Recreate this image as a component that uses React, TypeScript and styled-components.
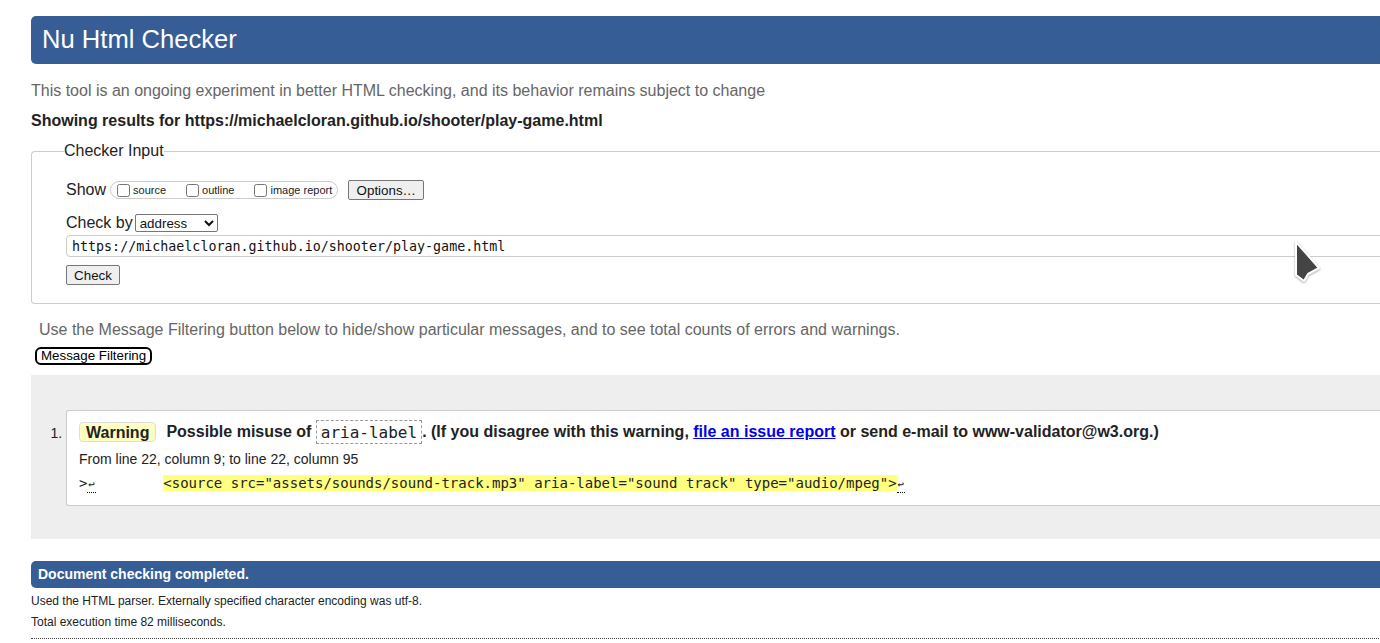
import React from "react";
import styled, { createGlobalStyle } from "styled-components";

const Global = createGlobalStyle`
  html, body { margin: 0; padding: 0; overflow: hidden; background: #fff; }
  body { font-family: "Liberation Sans", Arial, sans-serif; color: #222; }
`;

const Page = styled.div`
  position: relative;
  width: 1500px;
  padding: 16px 0 0 31px;
  font-size: 16px;
`;

const Header = styled.h1`
  margin: 0;
  height: 48px;
  line-height: 46px;
  padding-left: 11px;
  background: #365d95;
  color: #fff;
  font-size: 25.6px;
  font-weight: normal;
  border-radius: 5px 0 0 5px;
`;

const Intro = styled.p`
  margin: 17px 0 0;
  line-height: 19px;
  color: #666;
`;

const Showing = styled.p`
  margin: 11px 0 0;
  line-height: 19px;
  font-weight: bold;
`;

const Fieldset = styled.fieldset`
  margin: 12px 0 0;
  padding: 0 0 18px 34px;
  border: 1px solid #ccc;
  border-right: none;
  border-radius: 4px 0 0 4px;
`;

const Legend = styled.legend`
  padding: 0;
  margin-left: -2px;
  line-height: 18px;
  font-size: 16px;
  color: #222;
`;

const Row = styled.div<{ $mt: number; $h: number }>`
  display: flex;
  align-items: center;
  height: ${(p) => p.$h}px;
  margin-top: ${(p) => p.$mt}px;
`;

const Label = styled.span<{ $mr: number }>`
  line-height: 18px;
  margin-right: ${(p) => p.$mr}px;
`;

const OptionBox = styled.div`
  display: flex;
  align-items: center;
  height: 18px;
  box-sizing: border-box;
  border: 1px solid #ccc;
  border-radius: 9px;
  padding: 0 5px 0 2px;
  font-size: 11px;
  color: #222;
`;

const Opt = styled.label<{ $mr: number }>`
  display: flex;
  align-items: center;
  margin-right: ${(p) => p.$mr}px;
  input { margin: 0 3px 0 4px; width: 13px; height: 13px; }
`;

const Btn = styled.button`
  font-family: "Liberation Sans", Arial, sans-serif;
  font-size: 13.33px;
  color: #111;
  background: #efefef;
  border: 1px solid #767676;
  border-radius: 2px;
  height: 20px;
  padding: 0 7px;
  box-sizing: border-box;
`;

const OptionsBtn = styled(Btn)`
  margin-left: 10px;
  width: 76px;
  padding: 0;
`;

const Select = styled.select`
  font-family: "Liberation Sans", Arial, sans-serif;
  font-size: 13.33px;
  width: 83px;
  height: 18px;
  padding: 0;
  border: 1px solid #767676;
  border-radius: 2px;
  background: #fff;
  color: #111;
`;

const UrlInput = styled.input`
  display: block;
  width: 1400px;
  height: 22px;
  box-sizing: border-box;
  margin-top: 3px;
  border: 1px solid #ccc;
  border-radius: 4px;
  padding: 0 5px;
  font-family: "DejaVu Sans Mono", monospace;
  font-size: 13.33px;
  color: #111;
  background: #fff;
`;

const CheckBtn = styled(Btn)`
  display: block;
  margin-top: 8px;
  width: 54px;
  padding: 0;
`;

const FilterNote = styled.p`
  margin: 16px 0 0;
  padding-left: 8px;
  line-height: 19px;
  color: #666;
`;

const FilterBtn = styled.button`
  display: block;
  margin: 8px 0 0 4px;
  height: 18px;
  box-sizing: border-box;
  padding: 0 4px;
  border: 2px solid #000;
  border-radius: 6px;
  background: #fff;
  font-family: "Liberation Sans", Arial, sans-serif;
  font-size: 13.33px;
  line-height: 14px;
  color: #000;
`;

const Results = styled.div`
  margin-top: 10px;
  background: #eee;
  padding: 35px 0 33px 35px;
`;

const List = styled.ol`
  margin: 0;
  padding: 0;
  list-style: decimal;
  li::marker { font-size: 14px; }
`;

const Card = styled.li`
  background: #fff;
  border: 1px solid #ccc;
  border-right: none;
  border-radius: 3px 0 0 3px;
  padding: 8px 0 12px 12px;
  font-size: 14px;
`;

const MsgLine = styled.p`
  margin: 0;
  display: flex;
  align-items: center;
  height: 25px;
  font-weight: bold;
  font-size: 16px;
  white-space: pre;
`;

const Badge = styled.strong`
  display: inline-block;
  height: 20px;
  line-height: 19px;
  box-sizing: border-box;
  padding: 0 6px;
  background: #ffffc0;
  border: 1px solid #ddd;
  border-radius: 4px;
  margin-right: 10px;
`;

const Code = styled.code`
  display: inline-block;
  height: 24px;
  line-height: 23px;
  box-sizing: border-box;
  padding: 0 4px;
  border: 1px dashed #999;
  font-family: "DejaVu Sans Mono", monospace;
  font-weight: normal;
  font-size: 16px;
`;

const Link = styled.a`
  color: #00e;
  text-decoration: underline;
`;

const Location = styled.p`
  margin: 6px 0 0;
  line-height: 18px;
`;

const Extract = styled.p`
  margin: 6px 0 0;
  line-height: 18px;
  font-family: "DejaVu Sans Mono", monospace;
  font-size: 14px;
  white-space: pre;
`;

const Mark = styled.b`
  font-weight: normal;
  background: #ffff80;
`;

const Lf = styled.span`
  display: inline-block;
  width: 8.43px;
  line-height: 14px;
  border-bottom: 1px dotted #000;
  font-size: 11px;
  text-align: center;
`;

const Done = styled.h2`
  margin: 22px 0 0;
  height: 27px;
  line-height: 27px;
  padding-left: 7px;
  background: #365d95;
  color: #fff;
  font-size: 14px;
  font-weight: bold;
  border-radius: 5px 0 0 5px;
`;

const Small = styled.p`
  margin: 6px 0 0;
  line-height: 15px;
  font-size: 12px;
  color: #222;
`;

const Rule = styled.hr`
  margin: 8px 0 0;
  border: none;
  border-top: 1px dotted #444;
`;

const Cursor = styled.svg`
  position: absolute;
  left: 1294px;
  top: 240px;
  filter: drop-shadow(0 1px 1px rgba(0,0,0,0.35));
`;

export default function App() {
  return (
    <Page>
      <Global />
      <Header>Nu Html Checker</Header>
      <Intro>This tool is an ongoing experiment in better HTML checking, and its behavior remains subject to change</Intro>
      <Showing>Showing results for https://michaelcloran.github.io/shooter/play-game.html</Showing>
      <Fieldset>
        <Legend>Checker Input</Legend>
        <Row $mt={20} $h={20}>
          <Label $mr={4}>Show</Label>
          <OptionBox>
            <Opt $mr={16}><input type="checkbox" />source</Opt>
            <Opt $mr={16}><input type="checkbox" />outline</Opt>
            <Opt $mr={0}><input type="checkbox" />image report</Opt>
          </OptionBox>
          <OptionsBtn>Options…</OptionsBtn>
        </Row>
        <Row $mt={14} $h={18}>
          <Label $mr={2}>Check by</Label>
          <Select defaultValue="address">
            <option value="address">address</option>
          </Select>
        </Row>
        <UrlInput readOnly value="https://michaelcloran.github.io/shooter/play-game.html" />
        <CheckBtn>Check</CheckBtn>
      </Fieldset>
      <FilterNote>Use the Message Filtering button below to hide/show particular messages, and to see total counts of errors and warnings.</FilterNote>
      <FilterBtn>Message Filtering</FilterBtn>
      <Results>
        <List>
          <Card>
            <MsgLine>
              <Badge>Warning</Badge>
              <span>Possible misuse of </span>
              <Code>aria-label</Code>
              <span>. (If you disagree with this warning, </span>
              <Link href="#">file an issue report</Link>
              <span> or send e-mail to www-validator@w3.org.)</span>
            </MsgLine>
            <Location>From line 22, column 9; to line 22, column 95</Location>
            <Extract>
              {">"}<Lf>↩</Lf>{"        "}
              <Mark>{'<source src="assets/sounds/sound-track.mp3" aria-label="sound track" type="audio/mpeg">'}</Mark>
              <Lf>↩</Lf>
            </Extract>
          </Card>
        </List>
      </Results>
      <Done>Document checking completed.</Done>
      <Small>Used the HTML parser. Externally specified character encoding was utf-8.</Small>
      <Small>Total execution time 82 milliseconds.</Small>
      <Rule />
      <Cursor width="30" height="46" viewBox="0 0 30 46">
        <polygon points="2,2 2,35 10,41 14,34 25,28" fill="#444" stroke="#fff" strokeWidth="2" strokeLinejoin="round" />
      </Cursor>
    </Page>
  );
}
